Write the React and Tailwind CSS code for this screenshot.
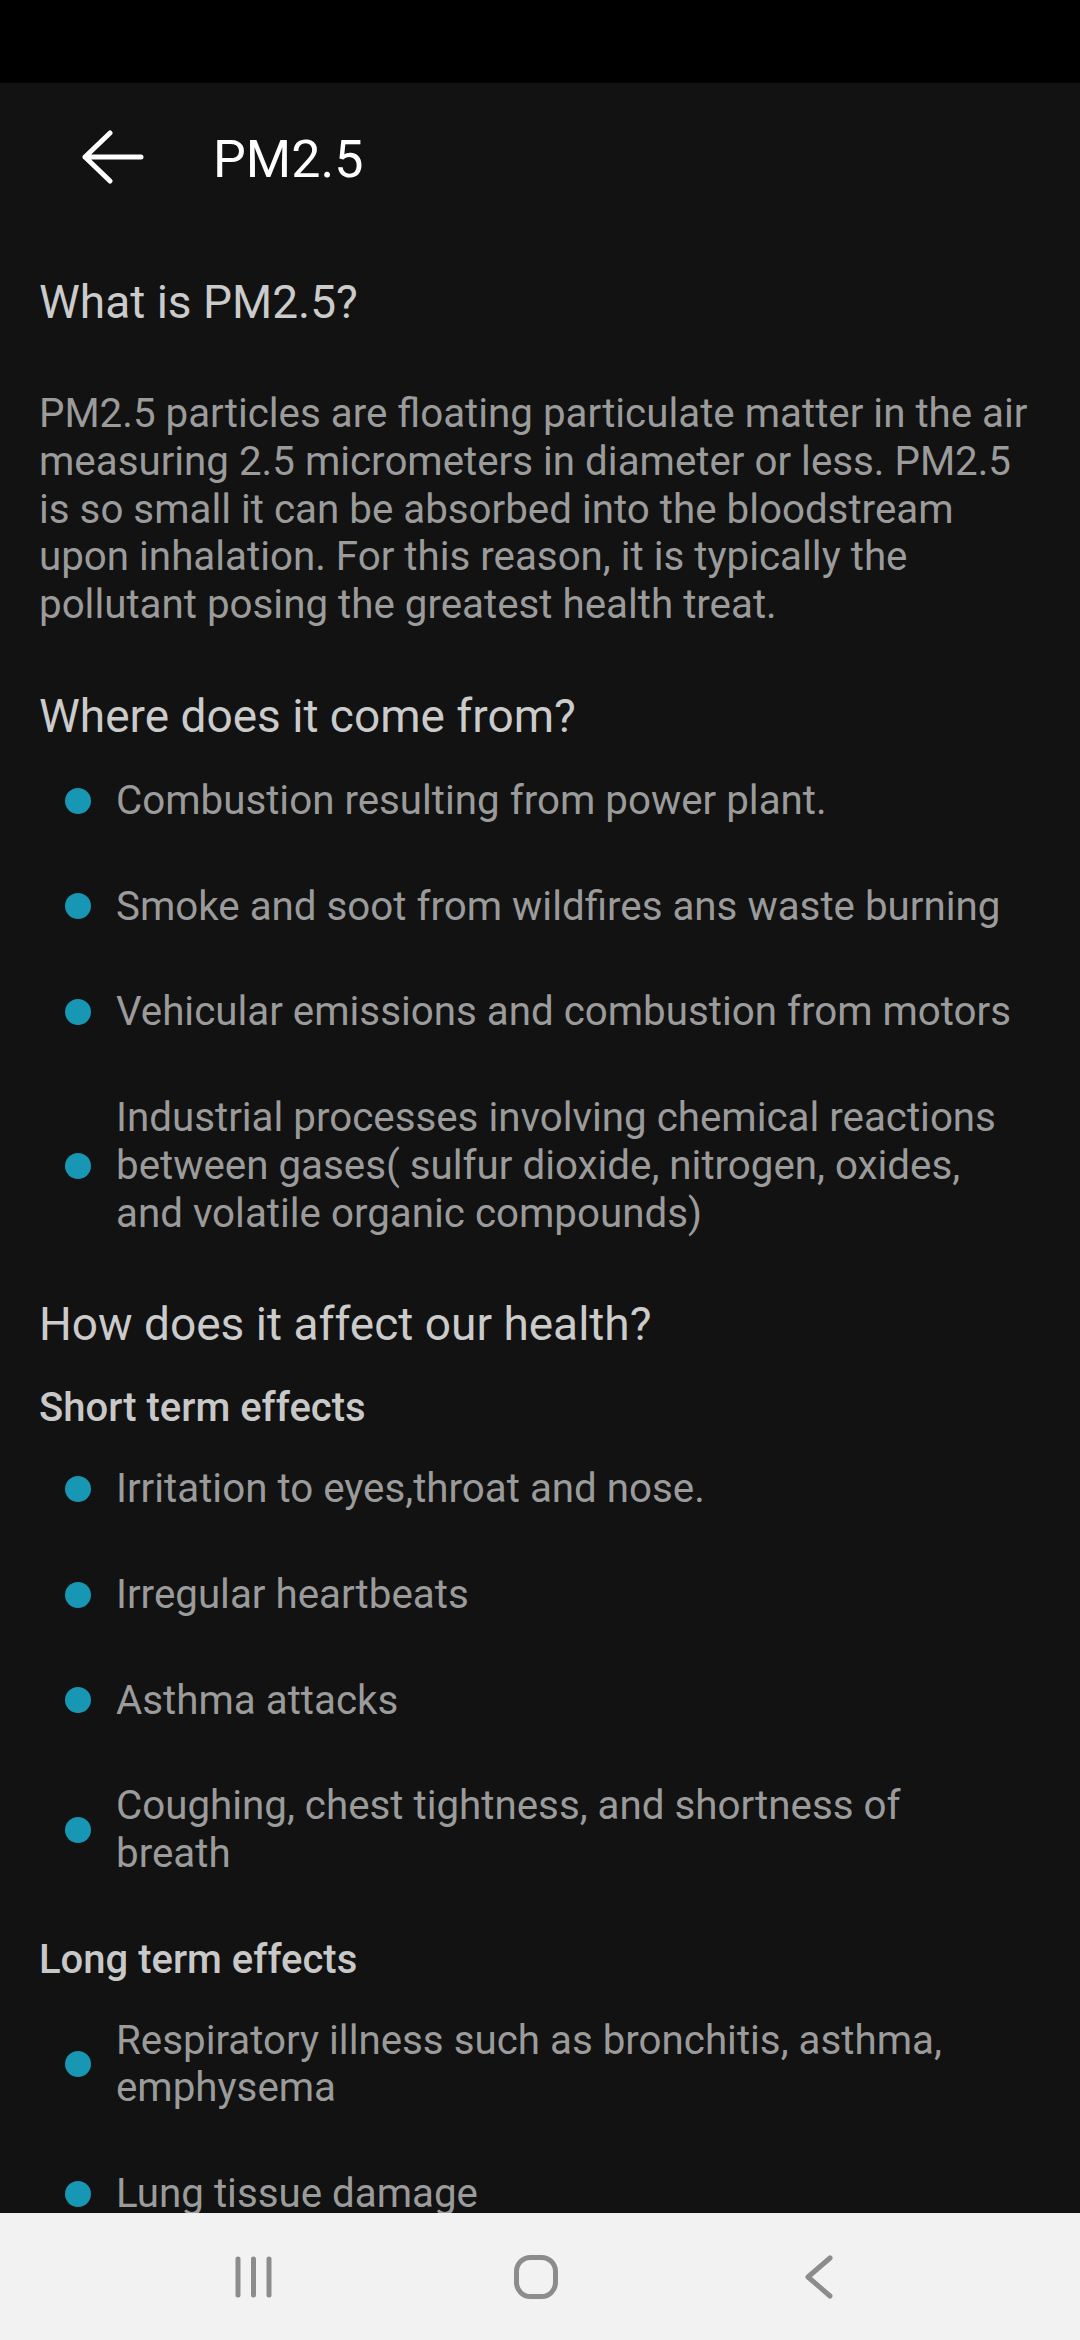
import React from "react";

const Bullet = ({ children }) => (
  <li className="flex items-center py-[29px]">
    <span className="ml-[26px] h-[26px] w-[26px] shrink-0 rounded-full bg-[#1797b3]" />
    <span className="ml-[25px] mr-[25px] text-[40.3px] leading-[47.75px] text-[#9b9b9b]">{children}</span>
  </li>
);

export default function App() {
  return (
    <div
      className="flex h-[2340px] w-[1080px] flex-col overflow-hidden bg-[#121212]"
      style={{ fontFamily: "Roboto, 'Noto Sans', sans-serif" }}
    >
      {/* status bar */}
      <div className="h-[83px] shrink-0 bg-black" />

      {/* app bar */}
      <div className="flex h-[147px] shrink-0 items-center">
        <svg
          className="ml-[82px] shrink-0"
          width="62"
          height="54"
          viewBox="0 0 62 54"
          fill="none"
          stroke="#ffffff"
          strokeWidth="5"
          strokeLinecap="round"
          strokeLinejoin="round"
        >
          <path d="M3 27 H59 M28 3 L3 27 L28 51" />
        </svg>
        <h1 className="ml-[69px] mt-[6px] text-[52px] font-normal leading-[61px] text-white">PM2.5</h1>
      </div>

      {/* content */}
      <div className="min-h-0 flex-1 overflow-hidden px-[39px]">
        <h2 className="mt-[44px] text-[46px] font-normal leading-[56px] text-[#cbcbcb]">What is PM2.5?</h2>
        <p className="mt-[60px] text-[40.3px] leading-[47.75px] text-[#9b9b9b]">
          PM2.5 particles are floating particulate matter in the air measuring 2.5 micrometers in diameter or less.
          PM2.5 is so small it can be absorbed into the bloodstream upon inhalation. For this reason, it is
          typically the pollutant posing the greatest health treat.
        </p>

        <h2 className="mt-[59px] text-[46px] font-normal leading-[56px] text-[#cbcbcb]">Where does it come from?</h2>
        <ul className="mt-[4px]">
          <Bullet>Combustion resulting from power plant.</Bullet>
          <Bullet>Smoke and soot from wildfires ans waste burning</Bullet>
          <Bullet>Vehicular emissions and combustion from motors</Bullet>
          <Bullet>
            Industrial processes involving chemical reactions between gases( sulfur dioxide, nitrogen, oxides, and
            volatile organic compounds)
          </Bullet>
        </ul>

        <h2 className="mt-[30px] text-[46px] font-normal leading-[56px] text-[#cbcbcb]">
          How does it affect our health?
        </h2>
        <h3 className="mt-[32px] text-[40px] font-medium leading-[47.75px] text-[#c8c8c8]">Short term effects</h3>
        <ul className="mt-[4px]">
          <Bullet>Irritation to eyes,throat and nose.</Bullet>
          <Bullet>Irregular heartbeats</Bullet>
          <Bullet>Asthma attacks</Bullet>
          <Bullet>Coughing, chest tightness, and shortness of breath</Bullet>
        </ul>

        <h3 className="mt-[29px] text-[40px] font-medium leading-[47.75px] text-[#c8c8c8]">Long term effects</h3>
        <ul className="mt-[4px]">
          <Bullet>Respiratory illness such as bronchitis, asthma, emphysema</Bullet>
          <Bullet>Lung tissue damage</Bullet>
        </ul>
      </div>

      {/* navigation bar */}
      <div className="flex h-[127px] shrink-0 items-center bg-[#f2f2f2]">
        <div className="flex w-full items-center">
          <svg className="ml-[232px] shrink-0" width="44" height="44" viewBox="0 0 44 44" fill="none" stroke="#8c8c8c" strokeWidth="5" strokeLinecap="round">
            <path d="M6 4 V40 M21.5 4 V40 M37 4 V40" />
          </svg>
          <svg className="ml-[236px] shrink-0" width="48" height="48" viewBox="0 0 48 48" fill="none" stroke="#8c8c8c" strokeWidth="5">
            <rect x="4.5" y="4.5" width="39" height="39" rx="14" />
          </svg>
          <svg className="ml-[244px] shrink-0" width="32" height="44" viewBox="0 0 32 44" fill="none" stroke="#8c8c8c" strokeWidth="5" strokeLinecap="round" strokeLinejoin="round">
            <path d="M26 3 L4 22 L26 41" />
          </svg>
        </div>
      </div>
    </div>
  );
}
